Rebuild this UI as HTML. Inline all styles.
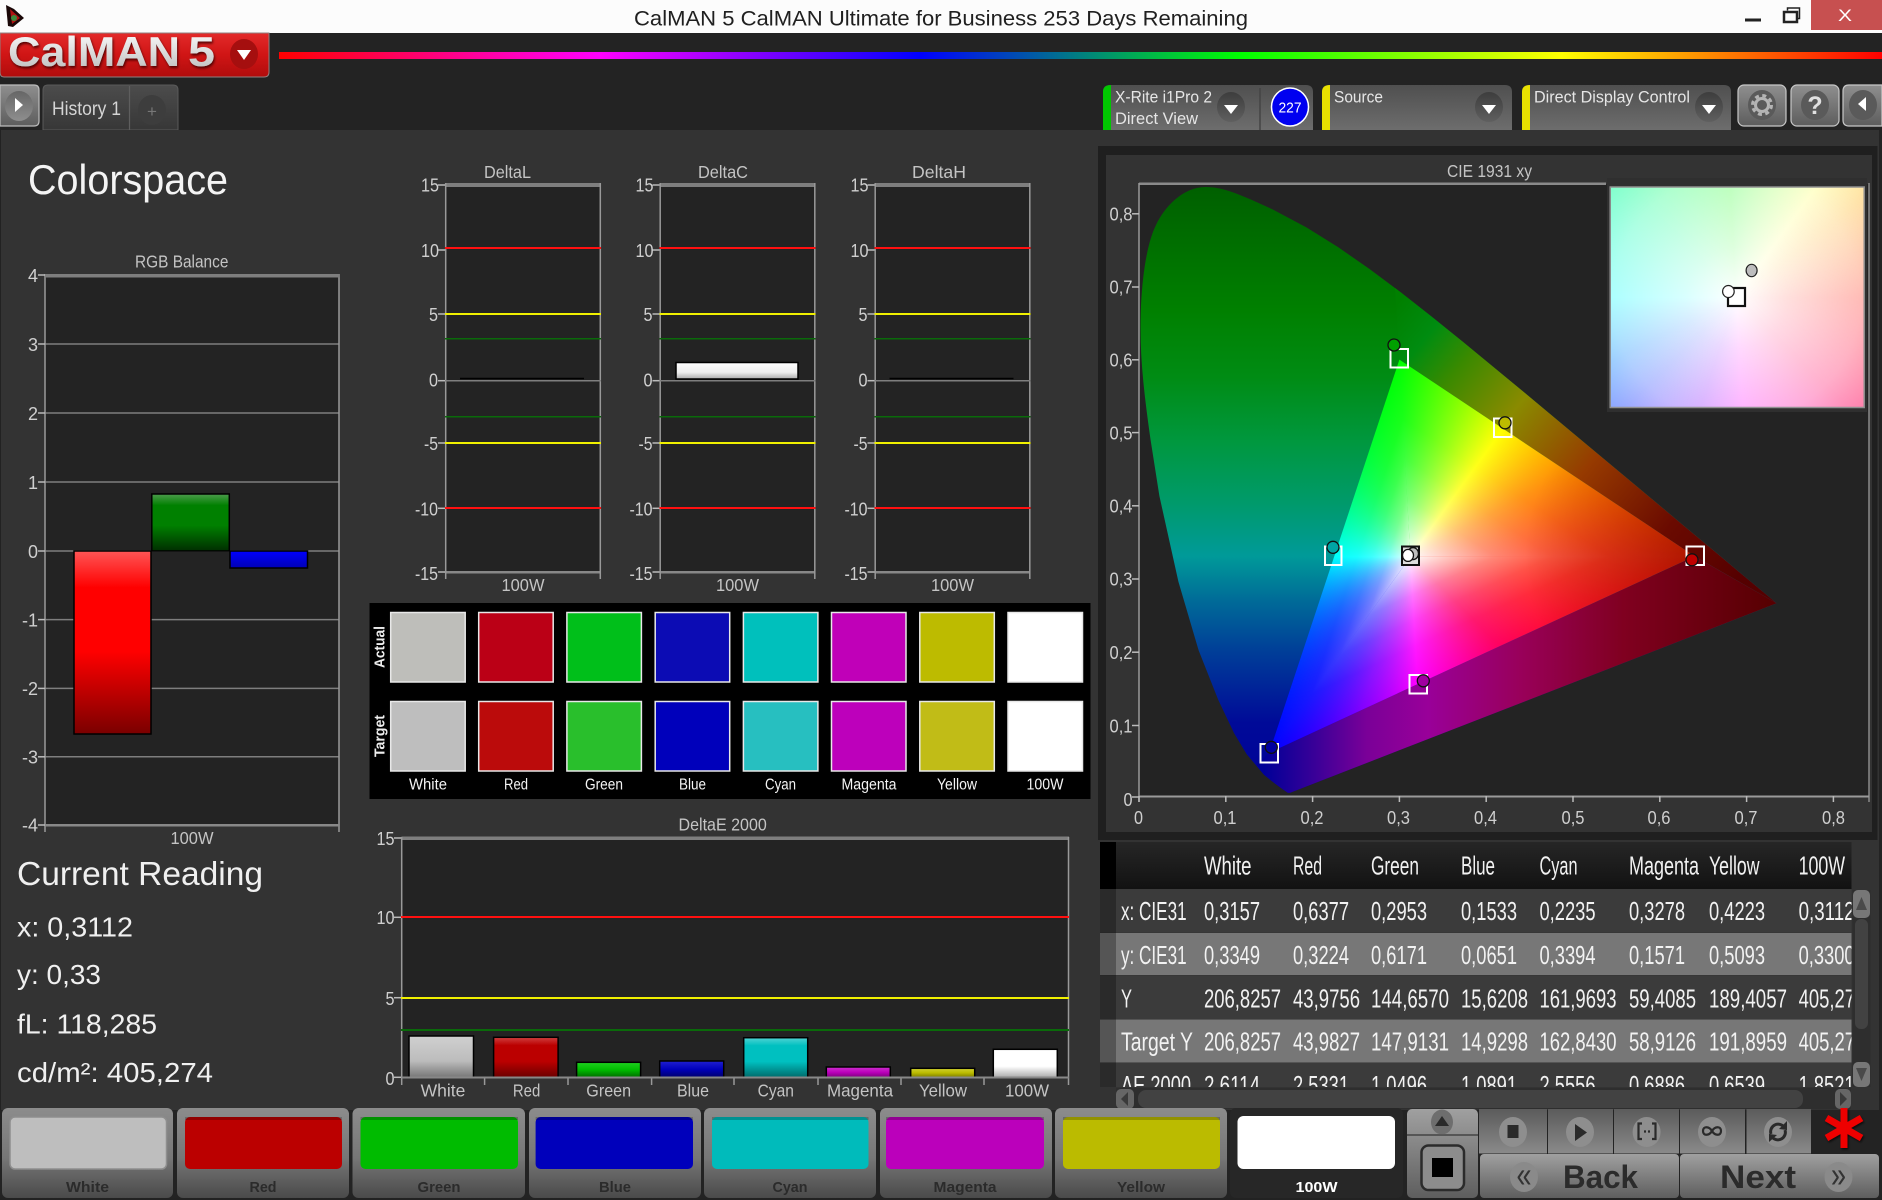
<!DOCTYPE html>
<html>
<head>
<meta charset="utf-8">
<title>CalMAN 5</title>
<style>
html,body{margin:0;padding:0;background:#232323;width:1882px;height:1200px;overflow:hidden}
svg{display:block;position:absolute;left:0;top:0}
text{font-family:"Liberation Sans",sans-serif}
.lb{fill:#cfcfcf;font-size:18px}
.ti{fill:#c4c4c4;font-size:17.5px}
.tb{fill:#f2f2f2;font-size:26px}
.bl{fill:#2b2b2b;font-size:15px;font-weight:bold}
.cr{fill:#f0f0f0}
</style>
</head>
<body>
<svg width="1882" height="1200" viewBox="0 0 1882 1200" xmlns="http://www.w3.org/2000/svg">
<defs>
<linearGradient id="rainbow" x1="279" x2="1882" y1="0" y2="0" gradientUnits="userSpaceOnUse">
<stop offset="0" stop-color="#f00"/><stop offset=".2" stop-color="#f0f"/><stop offset=".4" stop-color="#00f"/><stop offset=".6" stop-color="#0f0"/><stop offset=".8" stop-color="#ff0"/><stop offset="1" stop-color="#f00"/>
</linearGradient>
<linearGradient id="logo" x1="0" x2="0" y1="0" y2="1"><stop offset="0" stop-color="#e32a2a"/><stop offset=".5" stop-color="#d01515"/><stop offset="1" stop-color="#b00c0c"/></linearGradient>
<linearGradient id="logot" x1="0" x2="0" y1="0" y2="1"><stop offset="0" stop-color="#fff"/><stop offset="1" stop-color="#b9b9b9"/></linearGradient>
<linearGradient id="tab" x1="0" x2="0" y1="0" y2="1"><stop offset="0" stop-color="#4c4c4c"/><stop offset="1" stop-color="#373737"/></linearGradient>
<linearGradient id="sel" x1="0" x2="0" y1="0" y2="1"><stop offset="0" stop-color="#4f4f4f"/><stop offset="1" stop-color="#6d6d6d"/></linearGradient>
<linearGradient id="gb" x1="0" x2="0" y1="0" y2="1"><stop offset="0" stop-color="#8f8f8f"/><stop offset="1" stop-color="#5d5d5d"/></linearGradient>
<linearGradient id="circ" x1="0" x2="0" y1="0" y2="1"><stop offset="0" stop-color="#3d3d3d"/><stop offset="1" stop-color="#5f5f5f"/></linearGradient>
<linearGradient id="circ2" x1="0" x2="0" y1="0" y2="1"><stop offset="0" stop-color="#666"/><stop offset="1" stop-color="#8e8e8e"/></linearGradient>
<linearGradient id="bt" x1="0" x2="0" y1="0" y2="1"><stop offset="0" stop-color="#8c8c8c"/><stop offset=".55" stop-color="#777"/><stop offset="1" stop-color="#4a4a4a"/></linearGradient>
<linearGradient id="act" x1="0" x2="0" y1="0" y2="1"><stop offset="0" stop-color="#5b5b5b"/><stop offset="1" stop-color="#8a8a8a"/></linearGradient>
<linearGradient id="act2" x1="0" x2="0" y1="0" y2="1"><stop offset="0" stop-color="#a0a0a0"/><stop offset="1" stop-color="#5e5e5e"/></linearGradient>
<linearGradient id="hd" x1="0" x2="0" y1="0" y2="1"><stop offset="0" stop-color="#262626"/><stop offset="1" stop-color="#121212"/></linearGradient>
<linearGradient id="br" x1="0" x2="0" y1="0" y2="1"><stop offset="0" stop-color="#ff5555"/><stop offset=".2" stop-color="#f00"/><stop offset=".55" stop-color="#f00"/><stop offset="1" stop-color="#7a0000"/></linearGradient>
<linearGradient id="bg" x1="0" x2="0" y1="0" y2="1"><stop offset="0" stop-color="#4c9c4c"/><stop offset=".2" stop-color="#008000"/><stop offset=".55" stop-color="#008000"/><stop offset="1" stop-color="#002e00"/></linearGradient>
<linearGradient id="bb" x1="0" x2="0" y1="0" y2="1"><stop offset="0" stop-color="#00f"/><stop offset="1" stop-color="#0000b5"/></linearGradient>
<linearGradient id="wb" x1="0" x2="0" y1="0" y2="1"><stop offset="0" stop-color="#fff"/><stop offset=".6" stop-color="#eee"/><stop offset="1" stop-color="#aaa"/></linearGradient>
<linearGradient id="e1" x1="0" x2="0" y1="0" y2="1"><stop offset="0" stop-color="#d0d0d0"/><stop offset=".6" stop-color="#bcbcbc"/><stop offset="1" stop-color="#777"/></linearGradient>
<linearGradient id="e2" x1="0" x2="0" y1="0" y2="1"><stop offset="0" stop-color="#d04040"/><stop offset=".2" stop-color="#bb0000"/><stop offset=".6" stop-color="#bb0000"/><stop offset="1" stop-color="#6a0000"/></linearGradient>
<linearGradient id="e3" x1="0" x2="0" y1="0" y2="1"><stop offset="0" stop-color="#20d020"/><stop offset=".5" stop-color="#00bb00"/><stop offset="1" stop-color="#006a00"/></linearGradient>
<linearGradient id="e4" x1="0" x2="0" y1="0" y2="1"><stop offset="0" stop-color="#2020d0"/><stop offset=".5" stop-color="#0000bb"/><stop offset="1" stop-color="#00006a"/></linearGradient>
<linearGradient id="e5" x1="0" x2="0" y1="0" y2="1"><stop offset="0" stop-color="#50d4d4"/><stop offset=".2" stop-color="#00c0c0"/><stop offset=".6" stop-color="#00c0c0"/><stop offset="1" stop-color="#006a6a"/></linearGradient>
<linearGradient id="e6" x1="0" x2="0" y1="0" y2="1"><stop offset="0" stop-color="#d030d0"/><stop offset=".5" stop-color="#bb00bb"/><stop offset="1" stop-color="#7a007a"/></linearGradient>
<linearGradient id="e7" x1="0" x2="0" y1="0" y2="1"><stop offset="0" stop-color="#d0d030"/><stop offset=".5" stop-color="#bbbb00"/><stop offset="1" stop-color="#7a7a00"/></linearGradient>
<linearGradient id="e8" x1="0" x2="0" y1="0" y2="1"><stop offset="0" stop-color="#fff"/><stop offset=".6" stop-color="#fff"/><stop offset="1" stop-color="#aaa"/></linearGradient>
<linearGradient id="loc" x1="0" x2="0" y1="189" y2="796" gradientUnits="userSpaceOnUse">
<stop offset="0" stop-color="#006000"/><stop offset=".1" stop-color="#007000"/><stop offset=".2" stop-color="#008000"/><stop offset=".31" stop-color="#008c14"/><stop offset=".42" stop-color="#009840"/><stop offset=".52" stop-color="#009a6c"/><stop offset=".605" stop-color="#009a99"/><stop offset=".68" stop-color="#006a98"/><stop offset=".76" stop-color="#003f98"/><stop offset=".88" stop-color="#000a98"/><stop offset="1" stop-color="#000098"/>
</linearGradient>
<linearGradient id="ur" x1="1400" y1="300" x2="1740" y2="580" gradientUnits="userSpaceOnUse">
<stop offset="0" stop-color="#008000"/><stop offset=".1" stop-color="#008c10"/><stop offset=".2" stop-color="#3a8a00"/><stop offset=".36" stop-color="#8a8a00"/><stop offset=".57" stop-color="#963a00"/><stop offset=".8" stop-color="#6a0a00"/><stop offset="1" stop-color="#550000"/>
</linearGradient>
<linearGradient id="lo" x1="1264" x2="1777" y1="0" y2="0" gradientUnits="userSpaceOnUse">
<stop offset="0" stop-color="#000098"/><stop offset=".1" stop-color="#3a0098"/><stop offset=".2" stop-color="#7a0098"/><stop offset=".32" stop-color="#990099"/><stop offset=".5" stop-color="#99005a"/><stop offset=".7" stop-color="#800020"/><stop offset="1" stop-color="#560000"/>
</linearGradient>
<linearGradient id="w1" x1="1410.4" y1="556.9" x2="1498.2" y2="425.3" gradientUnits="userSpaceOnUse">
<stop offset="0" stop-color="#fff" stop-opacity="1"/><stop offset=".15" stop-color="#fff" stop-opacity=".72"/><stop offset=".3" stop-color="#fff" stop-opacity=".46"/><stop offset=".5" stop-color="#fff" stop-opacity=".24"/><stop offset=".7" stop-color="#fff" stop-opacity=".1"/><stop offset="1" stop-color="#fff" stop-opacity="0"/>
</linearGradient>
<linearGradient id="w2" x1="1410.4" y1="556.9" x2="1341.6" y2="534.1" gradientUnits="userSpaceOnUse">
<stop offset="0" stop-color="#fff" stop-opacity="1"/><stop offset=".15" stop-color="#fff" stop-opacity=".72"/><stop offset=".3" stop-color="#fff" stop-opacity=".46"/><stop offset=".5" stop-color="#fff" stop-opacity=".24"/><stop offset=".7" stop-color="#fff" stop-opacity=".1"/><stop offset="1" stop-color="#fff" stop-opacity="0"/>
</linearGradient>
<linearGradient id="w3" x1="1410.4" y1="556.9" x2="1460.1" y2="664.5" gradientUnits="userSpaceOnUse">
<stop offset="0" stop-color="#fff" stop-opacity="1"/><stop offset=".15" stop-color="#fff" stop-opacity=".72"/><stop offset=".3" stop-color="#fff" stop-opacity=".46"/><stop offset=".5" stop-color="#fff" stop-opacity=".24"/><stop offset=".7" stop-color="#fff" stop-opacity=".1"/><stop offset="1" stop-color="#fff" stop-opacity="0"/>
</linearGradient>
<radialGradient id="rd" cx="1694.5" cy="556.2" r="170" gradientUnits="userSpaceOnUse"><stop offset="0" stop-color="#000" stop-opacity=".32"/><stop offset="1" stop-color="#000" stop-opacity="0"/></radialGradient>
<filter id="sh" x="-10%" y="-20%" width="120%" height="150%"><feDropShadow dx="1" dy="2" stdDeviation="1.2" flood-color="#400" flood-opacity=".9"/></filter>
<filter id="sh2" x="-20%" y="-20%" width="140%" height="140%"><feDropShadow dx="1" dy="1.500" stdDeviation="1" flood-color="#000" flood-opacity=".7"/></filter>
<clipPath id="tc"><rect x="1100" y="842" width="751.5" height="245"/></clipPath>
</defs>

<!-- window background -->
<rect width="1882" height="1200" fill="#232323"/>
<rect x="0" y="0" width="1882" height="33" fill="#fcfcfc"/>
<polygon points="6,5 14,9 24,18 13,27 8,26" fill="#1a0808"/>
<polygon points="10,9 20,18 12,24" fill="#b01212"/>
<circle cx="14" cy="18" r="3" fill="#3c8a3c"/>
<text x="634" y="25.5" font-size="21.5" fill="#202020" textLength="614" lengthAdjust="spacingAndGlyphs">CalMAN 5 CalMAN Ultimate for Business 253 Days Remaining</text>
<rect x="1745" y="18.5" width="16" height="3" fill="#222"/>
<rect x="1784" y="12" width="13" height="10" fill="none" stroke="#222" stroke-width="2.500"/>
<path d="M1787.500 10.500V8H1799.500V18.500H1798" fill="none" stroke="#222" stroke-width="1.500"/>
<rect x="1811" y="0" width="71" height="30" fill="#c75050"/>
<text x="1845" y="21" font-size="16.500" fill="#fff" text-anchor="middle" textLength="14" lengthAdjust="spacingAndGlyphs">X</text>

<!-- logo -->
<rect x="279" y="52" width="1603" height="7" fill="url(#rainbow)"/>
<path d="M0 33H269V72Q269 77 264 77H4Q0 77 0 72Z" fill="url(#logo)" stroke="#8f8080" stroke-width="1"/>
<text x="8" y="66" font-size="42" font-weight="bold" fill="url(#logot)" filter="url(#sh)" textLength="172" lengthAdjust="spacingAndGlyphs">CalMAN</text>
<text x="188" y="66" font-size="42" font-weight="bold" fill="url(#logot)" filter="url(#sh)" textLength="27" lengthAdjust="spacingAndGlyphs">5</text>
<ellipse cx="244" cy="54" rx="14" ry="15" fill="#a50f0f"/>
<polygon points="237,50 251,50 244,60" fill="#fff"/>

<!-- tab row -->
<path d="M0 85H34Q39 85 39 90V121Q39 126 34 126H0Z" fill="url(#gb)" stroke="#bdbdbd" stroke-width="1.2"/>
<ellipse cx="19" cy="106" rx="14" ry="15" fill="url(#circ2)"/>
<polygon points="15,98 15,112 23,105" fill="#fff"/>
<path d="M43 130V90Q43 85 48 85H173Q178 85 178 90V130Z" fill="url(#tab)" stroke="#5a5a5a" stroke-width="1"/>
<line x1="129.500" y1="86" x2="129.500" y2="130" stroke="#5e5e5e" stroke-width="1.200"/>
<text x="52" y="115" font-size="19" fill="#d5d5d5" textLength="69" lengthAdjust="spacingAndGlyphs">History 1</text>
<ellipse cx="152" cy="110" rx="14" ry="15" fill="#3d3d3d"/>
<text x="152" y="117" font-size="17" fill="#777" text-anchor="middle">+</text>

<!-- top right controls -->
<path d="M1103 130V92Q1103 85 1110 85H1306Q1313 85 1313 92V130Z" fill="url(#sel)"/>
<path d="M1103 130V92Q1103 85 1111 85V130Z" fill="#00c800"/>
<line x1="1260" y1="88" x2="1260" y2="130" stroke="#444" stroke-width="1.500"/>
<text x="1115" y="102.500" font-size="17" fill="#e6e6e6" textLength="97" lengthAdjust="spacingAndGlyphs">X-Rite i1Pro 2</text>
<text x="1115" y="124" font-size="17" fill="#e6e6e6" textLength="83" lengthAdjust="spacingAndGlyphs">Direct View</text>
<ellipse cx="1231" cy="107" rx="14" ry="15" fill="url(#circ)"/>
<polygon points="1224,105 1238,105 1231,114" fill="#fff"/>
<ellipse cx="1290" cy="107" rx="18.500" ry="19" fill="#0000f0" stroke="#fff" stroke-width="1.500"/>
<text x="1290" y="112.500" font-size="15" fill="#fff" text-anchor="middle" textLength="23" lengthAdjust="spacingAndGlyphs">227</text>

<path d="M1322 130V92Q1322 85 1329 85H1505Q1512 85 1512 92V130Z" fill="url(#sel)"/>
<path d="M1322 130V92Q1322 85 1330 85V130Z" fill="#e8e000"/>
<text x="1334" y="102.500" font-size="17" fill="#e6e6e6" textLength="49" lengthAdjust="spacingAndGlyphs">Source</text>
<ellipse cx="1489" cy="107" rx="14" ry="15" fill="url(#circ)"/>
<polygon points="1482,105 1496,105 1489,114" fill="#fff"/>

<path d="M1522 130V92Q1522 85 1529 85H1724Q1731 85 1731 92V130Z" fill="url(#sel)"/>
<path d="M1522 130V92Q1522 85 1530 85V130Z" fill="#e8e000"/>
<text x="1534" y="102.500" font-size="17" fill="#e6e6e6" textLength="156" lengthAdjust="spacingAndGlyphs">Direct Display Control</text>
<ellipse cx="1709" cy="107" rx="14" ry="15" fill="url(#circ)"/>
<polygon points="1702,105 1716,105 1709,114" fill="#fff"/>

<rect x="1738" y="85" width="48" height="41" rx="6" fill="url(#gb)" stroke="#c8c8c8" stroke-width="1.200"/>
<ellipse cx="1762" cy="105" rx="14" ry="15" fill="#5a5a5a"/>
<circle cx="1762" cy="105" r="6.500" fill="none" stroke="#b4b4b4" stroke-width="3"/>
<circle cx="1762" cy="105" r="9.500" fill="none" stroke="#b4b4b4" stroke-width="3" stroke-dasharray="4 3.460"/>
<rect x="1791" y="85" width="48" height="41" rx="6" fill="url(#gb)" stroke="#c8c8c8" stroke-width="1.200"/>
<ellipse cx="1815" cy="105" rx="14" ry="15" fill="#5a5a5a"/>
<text x="1815" y="114" font-size="25" font-weight="bold" fill="#e0e0e0" text-anchor="middle">?</text>
<path d="M1882 85H1849Q1843 85 1843 91V120Q1843 126 1849 126H1882Z" fill="url(#gb)" stroke="#c8c8c8" stroke-width="1.200"/>
<ellipse cx="1863" cy="105" rx="14" ry="15" fill="#5a5a5a"/>
<polygon points="1866,97 1866,111 1858,104" fill="#fff"/>

<!-- main panel -->
<rect x="1" y="130" width="1878" height="980" fill="#333"/>
<rect x="0" y="130" width="1" height="980" fill="#222"/>
<text x="28" y="194" font-size="42" fill="#f4f4f4" textLength="200" lengthAdjust="spacingAndGlyphs">Colorspace</text>

<!-- RGB Balance -->
<rect x="45" y="275" width="294" height="550" fill="#232323"/>
<g stroke="#7e7e7e" stroke-width="1.500">
<line x1="45" x2="339" y1="344" y2="344"/><line x1="45" x2="339" y1="413" y2="413"/><line x1="45" x2="339" y1="482" y2="482"/><line x1="45" x2="339" y1="551" y2="551"/><line x1="45" x2="339" y1="619.600" y2="619.600"/><line x1="45" x2="339" y1="688.400" y2="688.400"/><line x1="45" x2="339" y1="756.800" y2="756.800"/>
</g>
<g stroke="#999" stroke-width="1.500" fill="none">
<line x1="45" x2="45" y1="274" y2="832"/><line x1="339" x2="339" y1="274" y2="832"/>
</g>
<rect x="45" y="274" width="294.800" height="3.500" fill="#7e7e7e"/>
<rect x="45" y="824" width="294.800" height="2.500" fill="#888"/>
<g stroke="#bbb" stroke-width="1.500"><line x1="38" x2="45" y1="275" y2="275"/><line x1="38" x2="45" y1="344" y2="344"/><line x1="38" x2="45" y1="413" y2="413"/><line x1="38" x2="45" y1="482" y2="482"/><line x1="38" x2="45" y1="551" y2="551"/><line x1="38" x2="45" y1="619.600" y2="619.600"/><line x1="38" x2="45" y1="688.400" y2="688.400"/><line x1="38" x2="45" y1="756.800" y2="756.800"/><line x1="38" x2="45" y1="825" y2="825"/></g>
<g class="lb" text-anchor="end">
<text x="38" y="282">4</text><text x="38" y="351">3</text><text x="38" y="420">2</text><text x="38" y="489">1</text><text x="38" y="558">0</text><text x="38" y="626.500">-1</text><text x="38" y="695">-2</text><text x="38" y="763.500">-3</text><text x="38" y="831.500">-4</text>
</g>
<rect x="74" y="551" width="77" height="183" fill="url(#br)" stroke="#000" stroke-width="1.500"/>
<rect x="151.800" y="494" width="77.500" height="57" fill="url(#bg)" stroke="#000" stroke-width="1.500"/>
<rect x="230" y="551" width="77.500" height="17" fill="url(#bb)" stroke="#000" stroke-width="1.500"/>
<text x="135" y="267.700" class="ti" textLength="93.400" lengthAdjust="spacingAndGlyphs">RGB Balance</text>
<text x="170.500" y="844" class="ti" textLength="43" lengthAdjust="spacingAndGlyphs">100W</text>

<!-- Current reading -->
<text x="17" y="885" class="cr" font-size="33" textLength="246" lengthAdjust="spacingAndGlyphs">Current Reading</text>
<text x="17" y="936.500" class="cr" font-size="27.500" textLength="116" lengthAdjust="spacingAndGlyphs">x: 0,3112</text>
<text x="17" y="984" class="cr" font-size="27.500" textLength="84" lengthAdjust="spacingAndGlyphs">y: 0,33</text>
<text x="17" y="1033.500" class="cr" font-size="27.500" textLength="140" lengthAdjust="spacingAndGlyphs">fL: 118,285</text>
<text x="17" y="1082" class="cr" font-size="27.500" textLength="196" lengthAdjust="spacingAndGlyphs">cd/m²: 405,274</text>

<!-- DeltaL -->
<g>
<rect x="445.500" y="185" width="155" height="388" fill="#232323"/>
<rect x="445.500" y="183" width="155.500" height="4" fill="#7e7e7e"/>
<rect x="445.500" y="571" width="155.500" height="2.500" fill="#888"/>
<g stroke="#999" stroke-width="1.500"><line x1="445.700" x2="445.700" y1="183" y2="579"/><line x1="600.300" x2="600.300" y1="183" y2="579"/></g>
<line x1="445" x2="601" y1="248" y2="248" stroke="#ff1010" stroke-width="2"/>
<line x1="445" x2="601" y1="314" y2="314" stroke="#f0f000" stroke-width="2"/>
<line x1="445" x2="601" y1="338.700" y2="338.700" stroke="#0a6a0a" stroke-width="1.500"/>
<line x1="445" x2="601" y1="380.700" y2="380.700" stroke="#7e7e7e" stroke-width="1.500"/>
<line x1="445" x2="601" y1="416.700" y2="416.700" stroke="#0a6a0a" stroke-width="1.500"/>
<line x1="445" x2="601" y1="443" y2="443" stroke="#f0f000" stroke-width="2"/>
<line x1="445" x2="601" y1="508" y2="508" stroke="#ff1010" stroke-width="2"/>
<g stroke="#bbb" stroke-width="1.500"><line x1="438" x2="445" y1="185" y2="185"/><line x1="438" x2="445" y1="250" y2="250"/><line x1="438" x2="445" y1="314" y2="314"/><line x1="438" x2="445" y1="380.700" y2="380.700"/><line x1="438" x2="445" y1="443" y2="443"/><line x1="438" x2="445" y1="508.300" y2="508.300"/><line x1="438" x2="445" y1="572" y2="572"/></g>
<g class="lb" text-anchor="end">
<text x="439" y="191.700" textLength="18" lengthAdjust="spacingAndGlyphs">15</text><text x="439" y="257" textLength="18" lengthAdjust="spacingAndGlyphs">10</text><text x="438" y="321" textLength="9" lengthAdjust="spacingAndGlyphs">5</text><text x="438" y="386.700" textLength="9" lengthAdjust="spacingAndGlyphs">0</text><text x="438" y="450" textLength="14" lengthAdjust="spacingAndGlyphs">-5</text><text x="438" y="515.700" textLength="23" lengthAdjust="spacingAndGlyphs">-10</text><text x="438" y="580" textLength="23" lengthAdjust="spacingAndGlyphs">-15</text>
</g>
<line x1="460" x2="584" y1="378.500" y2="378.500" stroke="#000" stroke-width="1.500"/>
<text x="484" y="178" class="ti" textLength="47" lengthAdjust="spacingAndGlyphs">DeltaL</text>
<text x="501.500" y="591" class="ti" textLength="43" lengthAdjust="spacingAndGlyphs">100W</text>
</g>

<!-- DeltaC -->
<g transform="translate(214.500 0)">
<rect x="445.500" y="185" width="155" height="388" fill="#232323"/>
<rect x="445.500" y="183" width="155.500" height="4" fill="#7e7e7e"/>
<rect x="445.500" y="571" width="155.500" height="2.500" fill="#888"/>
<g stroke="#999" stroke-width="1.500"><line x1="445.700" x2="445.700" y1="183" y2="579"/><line x1="600.300" x2="600.300" y1="183" y2="579"/></g>
<line x1="445" x2="601" y1="248" y2="248" stroke="#ff1010" stroke-width="2"/>
<line x1="445" x2="601" y1="314" y2="314" stroke="#f0f000" stroke-width="2"/>
<line x1="445" x2="601" y1="338.700" y2="338.700" stroke="#0a6a0a" stroke-width="1.500"/>
<line x1="445" x2="601" y1="380.700" y2="380.700" stroke="#7e7e7e" stroke-width="1.500"/>
<line x1="445" x2="601" y1="416.700" y2="416.700" stroke="#0a6a0a" stroke-width="1.500"/>
<line x1="445" x2="601" y1="443" y2="443" stroke="#f0f000" stroke-width="2"/>
<line x1="445" x2="601" y1="508" y2="508" stroke="#ff1010" stroke-width="2"/>
<g stroke="#bbb" stroke-width="1.500"><line x1="438" x2="445" y1="185" y2="185"/><line x1="438" x2="445" y1="250" y2="250"/><line x1="438" x2="445" y1="314" y2="314"/><line x1="438" x2="445" y1="380.700" y2="380.700"/><line x1="438" x2="445" y1="443" y2="443"/><line x1="438" x2="445" y1="508.300" y2="508.300"/><line x1="438" x2="445" y1="572" y2="572"/></g>
<g class="lb" text-anchor="end">
<text x="439" y="191.700" textLength="18" lengthAdjust="spacingAndGlyphs">15</text><text x="439" y="257" textLength="18" lengthAdjust="spacingAndGlyphs">10</text><text x="438" y="321" textLength="9" lengthAdjust="spacingAndGlyphs">5</text><text x="438" y="386.700" textLength="9" lengthAdjust="spacingAndGlyphs">0</text><text x="438" y="450" textLength="14" lengthAdjust="spacingAndGlyphs">-5</text><text x="438" y="515.700" textLength="23" lengthAdjust="spacingAndGlyphs">-10</text><text x="438" y="580" textLength="23" lengthAdjust="spacingAndGlyphs">-15</text>
</g>
<rect x="461.500" y="362.500" width="122" height="16.500" fill="url(#wb)" stroke="#000" stroke-width="1.500"/>
<text x="483.500" y="178" class="ti" textLength="50" lengthAdjust="spacingAndGlyphs">DeltaC</text>
<text x="501.500" y="591" class="ti" textLength="43" lengthAdjust="spacingAndGlyphs">100W</text>
</g>

<!-- DeltaH -->
<g transform="translate(429.500 0)">
<rect x="445.500" y="185" width="155" height="388" fill="#232323"/>
<rect x="445.500" y="183" width="155.500" height="4" fill="#7e7e7e"/>
<rect x="445.500" y="571" width="155.500" height="2.500" fill="#888"/>
<g stroke="#999" stroke-width="1.500"><line x1="445.700" x2="445.700" y1="183" y2="579"/><line x1="600.300" x2="600.300" y1="183" y2="579"/></g>
<line x1="445" x2="601" y1="248" y2="248" stroke="#ff1010" stroke-width="2"/>
<line x1="445" x2="601" y1="314" y2="314" stroke="#f0f000" stroke-width="2"/>
<line x1="445" x2="601" y1="338.700" y2="338.700" stroke="#0a6a0a" stroke-width="1.500"/>
<line x1="445" x2="601" y1="380.700" y2="380.700" stroke="#7e7e7e" stroke-width="1.500"/>
<line x1="445" x2="601" y1="416.700" y2="416.700" stroke="#0a6a0a" stroke-width="1.500"/>
<line x1="445" x2="601" y1="443" y2="443" stroke="#f0f000" stroke-width="2"/>
<line x1="445" x2="601" y1="508" y2="508" stroke="#ff1010" stroke-width="2"/>
<g stroke="#bbb" stroke-width="1.500"><line x1="438" x2="445" y1="185" y2="185"/><line x1="438" x2="445" y1="250" y2="250"/><line x1="438" x2="445" y1="314" y2="314"/><line x1="438" x2="445" y1="380.700" y2="380.700"/><line x1="438" x2="445" y1="443" y2="443"/><line x1="438" x2="445" y1="508.300" y2="508.300"/><line x1="438" x2="445" y1="572" y2="572"/></g>
<g class="lb" text-anchor="end">
<text x="439" y="191.700" textLength="18" lengthAdjust="spacingAndGlyphs">15</text><text x="439" y="257" textLength="18" lengthAdjust="spacingAndGlyphs">10</text><text x="438" y="321" textLength="9" lengthAdjust="spacingAndGlyphs">5</text><text x="438" y="386.700" textLength="9" lengthAdjust="spacingAndGlyphs">0</text><text x="438" y="450" textLength="14" lengthAdjust="spacingAndGlyphs">-5</text><text x="438" y="515.700" textLength="23" lengthAdjust="spacingAndGlyphs">-10</text><text x="438" y="580" textLength="23" lengthAdjust="spacingAndGlyphs">-15</text>
</g>
<line x1="460" x2="584" y1="378.500" y2="378.500" stroke="#000" stroke-width="1.500"/>
<text x="482.500" y="178" class="ti" textLength="54" lengthAdjust="spacingAndGlyphs">DeltaH</text>
<text x="501.500" y="591" class="ti" textLength="43" lengthAdjust="spacingAndGlyphs">100W</text>
</g>

<!-- swatches -->
<rect x="369.500" y="603" width="721" height="196" fill="#000"/>
<g stroke="#e8e8e8" stroke-width="1.500">
<rect x="390.700" y="612.500" width="74.500" height="69.500" fill="#bebeba"/>
<rect x="478.700" y="612.500" width="74.500" height="69.500" fill="#bb0016"/>
<rect x="566.900" y="612.500" width="74.500" height="69.500" fill="#00bf1a"/>
<rect x="655.200" y="612.500" width="74.500" height="69.500" fill="#0c0cb4"/>
<rect x="743.400" y="612.500" width="74.500" height="69.500" fill="#00c0bc"/>
<rect x="831.500" y="612.500" width="74.500" height="69.500" fill="#c000b8"/>
<rect x="919.800" y="612.500" width="74.500" height="69.500" fill="#bdbb00"/>
<rect x="1008" y="612.500" width="74.500" height="69.500" fill="#fff"/>
<rect x="390.700" y="701.500" width="74.500" height="69.500" fill="#bebebe"/>
<rect x="478.700" y="701.500" width="74.500" height="69.500" fill="#bb0b0b"/>
<rect x="566.900" y="701.500" width="74.500" height="69.500" fill="#29bf2c"/>
<rect x="655.200" y="701.500" width="74.500" height="69.500" fill="#0000bb"/>
<rect x="743.400" y="701.500" width="74.500" height="69.500" fill="#27bfc0"/>
<rect x="831.500" y="701.500" width="74.500" height="69.500" fill="#bd00bb"/>
<rect x="919.800" y="701.500" width="74.500" height="69.500" fill="#c1bc17"/>
<rect x="1008" y="701.500" width="74.500" height="69.500" fill="#fff"/>
</g>
<g fill="#f4f4f4" font-size="15.500" text-anchor="middle">
<text x="428" y="789.500" textLength="38" lengthAdjust="spacingAndGlyphs">White</text>
<text x="516" y="789.500" textLength="24" lengthAdjust="spacingAndGlyphs">Red</text>
<text x="604" y="789.500" textLength="38" lengthAdjust="spacingAndGlyphs">Green</text>
<text x="692.500" y="789.500" textLength="27" lengthAdjust="spacingAndGlyphs">Blue</text>
<text x="780.500" y="789.500" textLength="31" lengthAdjust="spacingAndGlyphs">Cyan</text>
<text x="869" y="789.500" textLength="55" lengthAdjust="spacingAndGlyphs">Magenta</text>
<text x="957" y="789.500" textLength="40" lengthAdjust="spacingAndGlyphs">Yellow</text>
<text x="1045" y="789.500" textLength="37" lengthAdjust="spacingAndGlyphs">100W</text>
</g>
<text transform="translate(384.500 647) rotate(-90)" text-anchor="middle" font-size="14.500" font-weight="bold" fill="#eee" textLength="42" lengthAdjust="spacingAndGlyphs">Actual</text>
<text transform="translate(384.500 736) rotate(-90)" text-anchor="middle" font-size="14.500" font-weight="bold" fill="#eee" textLength="42" lengthAdjust="spacingAndGlyphs">Target</text>

<!-- DeltaE 2000 -->
<rect x="401.500" y="838" width="667" height="240" fill="#232323"/>
<rect x="401.500" y="836.500" width="667.500" height="3.500" fill="#7e7e7e"/>
<g stroke="#999" stroke-width="1.500"><line x1="401.700" x2="401.700" y1="837" y2="1085"/><line x1="1068.500" x2="1068.500" y1="837" y2="1085"/>
<line x1="484.600" x2="484.600" y1="1078" y2="1085"/><line x1="568" x2="568" y1="1078" y2="1085"/><line x1="651.600" x2="651.600" y1="1078" y2="1085"/><line x1="734" x2="734" y1="1078" y2="1085"/><line x1="818" x2="818" y1="1078" y2="1085"/><line x1="901" x2="901" y1="1078" y2="1085"/><line x1="984" x2="984" y1="1078" y2="1085"/></g>
<line x1="401" x2="1069" y1="917" y2="917" stroke="#ff1010" stroke-width="2"/>
<line x1="401" x2="1069" y1="998" y2="998" stroke="#f0f000" stroke-width="2"/>
<line x1="401" x2="1069" y1="1030" y2="1030" stroke="#0a6a0a" stroke-width="2"/>
<g stroke="#000" stroke-width="1.500">
<rect x="409" y="1036" width="64.500" height="41.500" fill="url(#e1)"/>
<rect x="493.600" y="1037.300" width="64.500" height="40.200" fill="url(#e2)"/>
<rect x="576.600" y="1062.300" width="64" height="15.200" fill="url(#e3)"/>
<rect x="659.700" y="1061" width="64" height="16.500" fill="url(#e4)"/>
<rect x="743.700" y="1037.700" width="64" height="39.800" fill="url(#e5)"/>
<rect x="826.300" y="1067" width="64" height="10.500" fill="url(#e6)"/>
<rect x="910.700" y="1068.300" width="64" height="9.200" fill="url(#e7)"/>
<rect x="993.300" y="1049.300" width="64" height="28.200" fill="url(#e8)"/>
</g>
<rect x="401.500" y="1076.500" width="667.500" height="2" fill="#888"/>
<g stroke="#bbb" stroke-width="1.500"><line x1="394" x2="401" y1="838" y2="838"/><line x1="394" x2="401" y1="917.300" y2="917.300"/><line x1="394" x2="401" y1="997.700" y2="997.700"/><line x1="394" x2="401" y1="1077.300" y2="1077.300"/></g>
<g class="lb" text-anchor="end">
<text x="394.500" y="845" textLength="18" lengthAdjust="spacingAndGlyphs">15</text><text x="394.500" y="924" textLength="18" lengthAdjust="spacingAndGlyphs">10</text><text x="394.500" y="1005" textLength="9" lengthAdjust="spacingAndGlyphs">5</text><text x="394.500" y="1085" textLength="9" lengthAdjust="spacingAndGlyphs">0</text>
</g>
<text x="678.500" y="830.700" class="ti" textLength="88.300" lengthAdjust="spacingAndGlyphs">DeltaE 2000</text>
<g class="ti" text-anchor="middle">
<text x="443" y="1096.700" textLength="44.800" lengthAdjust="spacingAndGlyphs">White</text>
<text x="526.600" y="1096.700" textLength="27.400" lengthAdjust="spacingAndGlyphs">Red</text>
<text x="608.700" y="1096.700" textLength="44.800" lengthAdjust="spacingAndGlyphs">Green</text>
<text x="693" y="1096.700" textLength="32" lengthAdjust="spacingAndGlyphs">Blue</text>
<text x="775.800" y="1096.700" textLength="36.300" lengthAdjust="spacingAndGlyphs">Cyan</text>
<text x="860" y="1096.700" textLength="66" lengthAdjust="spacingAndGlyphs">Magenta</text>
<text x="943" y="1096.700" textLength="48" lengthAdjust="spacingAndGlyphs">Yellow</text>
<text x="1027" y="1096.700" textLength="44" lengthAdjust="spacingAndGlyphs">100W</text>
</g>

<!-- CIE panel -->
<rect x="1098" y="146" width="779.500" height="694" fill="#1f1f1f"/>
<rect x="1106" y="155" width="766" height="677" fill="#333"/>
<rect x="1139" y="184" width="730" height="612.400" fill="#232323"/>
<path d="M1290.100 792.800L1287.800 792.700L1281.700 788.500L1274.900 783.500L1264 774.800L1246.700 754.300L1234.100 733.200L1218.200 699.800L1198.600 650.300L1178.400 581.600L1159.400 496L1150.600 440C1145 400 1140.500 365 1140.500 328C1140.500 285 1146 245 1156 225C1164 208 1182 187 1206 187C1222 187 1238 194 1252 200L1273.300 209.700L1306.400 227.400L1338.300 247.300L1369.700 269.100L1400.800 292.400L1431.800 316.700L1462.800 341.800L1524.500 392.600L1583.900 442.200L1638.300 487.600L1683.200 525.200L1716.900 553.200L1739.200 572L1763.100 591.900L1776.700 603.300Z" fill="url(#loc)"/>
<polygon points="1399.400,359.600 1395,288 1400.800,292.400 1431.800,316.700 1462.800,341.800 1524.500,392.600 1583.900,442.200 1638.300,487.600 1683.200,525.200 1716.900,553.200 1739.200,572 1763.100,591.900 1776.700,603.300 1694.500,556.200" fill="url(#ur)"/>
<polygon points="1269.200,752.700 1694.500,556.200 1776.700,603.300 1290.100,792.800 1287.800,792.700 1281.700,788.500 1274.900,783.500 1264,774.800 1256,765" fill="url(#lo)"/>
<foreignObject x="1260" y="350" width="440" height="410">
<div xmlns="http://www.w3.org/1999/xhtml" style="width:440px;height:410px;clip-path:polygon(434.500px 206.200px,139.400px 9.600px,9.200px 402.700px);background:conic-gradient(from 0deg at 150.400px 206.900px,#15ff00 0deg,#ffff00 35.800deg,#ff8a00 62deg,#ff2000 89.900deg,#ff0060 135deg,#ff00ff 176.800deg,#8000ff 198deg,#0000ff 215.800deg,#0080ff 243deg,#00ffff 270deg,#00ff80 315deg,#00ff00 356.800deg,#15ff00 360deg)"></div>
</foreignObject>
<polygon points="1410.400,556.900 1694.500,556.200 1399.400,359.600" fill="url(#w1)"/>
<polygon points="1410.400,556.900 1399.400,359.600 1269.200,752.700" fill="url(#w2)"/>
<polygon points="1410.400,556.900 1269.200,752.700 1694.500,556.200" fill="url(#w3)"/>
<polygon points="1694.500,556.200 1399.400,359.600 1269.200,752.700" fill="url(#rd)"/>

<!-- CIE frame -->
<rect x="1139" y="182.500" width="467" height="2.500" fill="#8a8a8a"/>
<line x1="1139" x2="1139" y1="183" y2="802" stroke="#999" stroke-width="1.500"/>
<line x1="1869" x2="1869" y1="183" y2="802" stroke="#8a8a8a" stroke-width="1.500"/>
<rect x="1139" y="795.500" width="730" height="2" fill="#9a9a9a"/>
<rect x="1607" y="178" width="260" height="234" fill="#2f2f2f"/>
<foreignObject x="1610.700" y="187.300" width="253.500" height="220">
<div xmlns="http://www.w3.org/1999/xhtml" style="width:253.500px;height:220px;background:radial-gradient(circle 168px at 125.300px 110.700px,rgba(255,255,255,1) 0,rgba(255,255,255,.85) 30%,rgba(255,255,255,.68) 74%,rgba(255,255,255,.5) 100%),conic-gradient(from 0deg at 125.300px 110.700px,#30ff30 0deg,#ffff70 35.800deg,#ffc040 52deg,#ff3020 89.900deg,#ff0060 135deg,#ff00ff 176.800deg,#8000ff 198deg,#2040ff 225deg,#0080ff 243deg,#00ffff 270deg,#00ff90 315deg,#20ff20 356.800deg,#30ff30 360deg)"></div>
</foreignObject>
<rect x="1610.200" y="187" width="254" height="220.500" fill="none" stroke="#909090" stroke-width="1.500"/>
<rect x="1728" y="288" width="17" height="18" fill="#fff" stroke="#111" stroke-width="2.200"/>
<ellipse cx="1751.600" cy="270.500" rx="5.500" ry="6.200" fill="#bdbdbd" stroke="#222" stroke-width="1.200"/>
<ellipse cx="1728.400" cy="291.500" rx="5.800" ry="6" fill="#fff" stroke="#222" stroke-width="1.200"/>

<!-- Markers -->
<g fill="none" stroke="#fff" stroke-width="2">
<rect x="1686.500" y="546.500" width="17.500" height="18.500"/>
<rect x="1390.500" y="349" width="17.500" height="18.500"/>
<rect x="1494" y="418.500" width="17.500" height="18.500"/>
<rect x="1325" y="546.500" width="16.500" height="18.500"/>
<rect x="1409.500" y="675" width="17.500" height="18.500"/>
<rect x="1260.500" y="744" width="17.500" height="18.500"/>
</g>
<rect x="1402" y="546.500" width="17" height="18.500" fill="#ddd" stroke="#111" stroke-width="2"/>
<g stroke="#111" stroke-width="1.300">
<ellipse cx="1394" cy="345" rx="6" ry="6" fill="#00a000"/>
<ellipse cx="1505" cy="422.800" rx="6" ry="6" fill="#bdbb00"/>
<ellipse cx="1333" cy="547.300" rx="6" ry="6" fill="#00a5a5"/>
<ellipse cx="1413" cy="553.600" rx="5.500" ry="6" fill="#bdbdbd"/>
<ellipse cx="1408" cy="555.400" rx="5.500" ry="6" fill="#fff"/>
<ellipse cx="1692" cy="559.800" rx="6" ry="6" fill="#c00000"/>
<ellipse cx="1423.300" cy="680.800" rx="6" ry="6" fill="#a000a0"/>
<ellipse cx="1271.300" cy="747.300" rx="6" ry="6" fill="#0000a0"/>
</g>

<!-- CIE axes -->
<g stroke="#bbb" stroke-width="1.500">
<line x1="1132" x2="1139" y1="213.800" y2="213.800"/><line x1="1132" x2="1139" y1="287" y2="287"/><line x1="1132" x2="1139" y1="359.800" y2="359.800"/><line x1="1132" x2="1139" y1="432.600" y2="432.600"/><line x1="1132" x2="1139" y1="505.800" y2="505.800"/><line x1="1132" x2="1139" y1="579" y2="579"/><line x1="1132" x2="1139" y1="652.200" y2="652.200"/><line x1="1132" x2="1139" y1="725.500" y2="725.500"/><line x1="1132" x2="1139" y1="797" y2="797"/>
<line x1="1139" x2="1139" y1="796" y2="802"/><line x1="1225.800" x2="1225.800" y1="796" y2="802"/><line x1="1312.600" x2="1312.600" y1="796" y2="802"/><line x1="1399.400" x2="1399.400" y1="796" y2="802"/><line x1="1486.200" x2="1486.200" y1="796" y2="802"/><line x1="1573" x2="1573" y1="796" y2="802"/><line x1="1659.800" x2="1659.800" y1="796" y2="802"/><line x1="1746.600" x2="1746.600" y1="796" y2="802"/><line x1="1833.400" x2="1833.400" y1="796" y2="802"/>
</g>
<g class="lb" text-anchor="end">
<text x="1132.500" y="220.500" textLength="23" lengthAdjust="spacingAndGlyphs">0,8</text>
<text x="1132.500" y="293.600" textLength="23" lengthAdjust="spacingAndGlyphs">0,7</text>
<text x="1132.500" y="366.400" textLength="23" lengthAdjust="spacingAndGlyphs">0,6</text>
<text x="1132.500" y="439.300" textLength="23" lengthAdjust="spacingAndGlyphs">0,5</text>
<text x="1132.500" y="512.500" textLength="23" lengthAdjust="spacingAndGlyphs">0,4</text>
<text x="1132.500" y="585.700" textLength="23" lengthAdjust="spacingAndGlyphs">0,3</text>
<text x="1132.500" y="658.900" textLength="23" lengthAdjust="spacingAndGlyphs">0,2</text>
<text x="1132.500" y="732.600" textLength="23" lengthAdjust="spacingAndGlyphs">0,1</text>
<text x="1132.500" y="806" textLength="9" lengthAdjust="spacingAndGlyphs">0</text>
</g>
<g class="lb" text-anchor="middle">
<text x="1138.500" y="824" textLength="9" lengthAdjust="spacingAndGlyphs">0</text>
<text x="1225" y="824" textLength="23" lengthAdjust="spacingAndGlyphs">0,1</text>
<text x="1312" y="824" textLength="23" lengthAdjust="spacingAndGlyphs">0,2</text>
<text x="1398.500" y="824" textLength="23" lengthAdjust="spacingAndGlyphs">0,3</text>
<text x="1485.500" y="824" textLength="23" lengthAdjust="spacingAndGlyphs">0,4</text>
<text x="1573" y="824" textLength="23" lengthAdjust="spacingAndGlyphs">0,5</text>
<text x="1659" y="824" textLength="23" lengthAdjust="spacingAndGlyphs">0,6</text>
<text x="1746" y="824" textLength="23" lengthAdjust="spacingAndGlyphs">0,7</text>
<text x="1833.500" y="824" textLength="23" lengthAdjust="spacingAndGlyphs">0,8</text>
</g>
<text x="1447" y="176.800" class="ti" textLength="85" lengthAdjust="spacingAndGlyphs">CIE 1931 xy</text>

<!-- table -->
<rect x="1100" y="842" width="751.500" height="47" fill="url(#hd)"/>
<rect x="1100" y="842" width="16" height="47" fill="#000"/>
<rect x="1100" y="889" width="751.500" height="43.500" fill="#3b3b3b"/>
<rect x="1100" y="933" width="751.500" height="42" fill="#777"/>
<rect x="1100" y="975.500" width="751.500" height="43.500" fill="#3b3b3b"/>
<rect x="1100" y="1019.500" width="751.500" height="43" fill="#777"/>
<rect x="1100" y="1063" width="751.500" height="24" fill="#3b3b3b"/>
<rect x="1100" y="889" width="16" height="198" fill="#000" fill-opacity=".28"/>
<g clip-path="url(#tc)">
<g class="tb">
<text x="1204" y="874.500" textLength="47.500" lengthAdjust="spacingAndGlyphs">White</text>
<text x="1293" y="874.500" textLength="29" lengthAdjust="spacingAndGlyphs">Red</text>
<text x="1371" y="874.500" textLength="48" lengthAdjust="spacingAndGlyphs">Green</text>
<text x="1461" y="874.500" textLength="34" lengthAdjust="spacingAndGlyphs">Blue</text>
<text x="1539.500" y="874.500" textLength="38" lengthAdjust="spacingAndGlyphs">Cyan</text>
<text x="1629" y="874.500" textLength="70" lengthAdjust="spacingAndGlyphs">Magenta</text>
<text x="1709" y="874.500" textLength="50.500" lengthAdjust="spacingAndGlyphs">Yellow</text>
<text x="1798.600" y="874.500" textLength="46.500" lengthAdjust="spacingAndGlyphs">100W</text>

<text x="1121" y="920" textLength="65.600" lengthAdjust="spacingAndGlyphs">x: CIE31</text>
<text x="1204" y="920" textLength="56" lengthAdjust="spacingAndGlyphs">0,3157</text>
<text x="1293" y="920" textLength="56" lengthAdjust="spacingAndGlyphs">0,6377</text>
<text x="1371" y="920" textLength="56" lengthAdjust="spacingAndGlyphs">0,2953</text>
<text x="1461" y="920" textLength="56" lengthAdjust="spacingAndGlyphs">0,1533</text>
<text x="1539.500" y="920" textLength="56" lengthAdjust="spacingAndGlyphs">0,2235</text>
<text x="1629" y="920" textLength="56" lengthAdjust="spacingAndGlyphs">0,3278</text>
<text x="1709" y="920" textLength="56" lengthAdjust="spacingAndGlyphs">0,4223</text>
<text x="1798.600" y="920" textLength="56" lengthAdjust="spacingAndGlyphs">0,3112</text>

<text x="1121" y="964" textLength="65.600" lengthAdjust="spacingAndGlyphs">y: CIE31</text>
<text x="1204" y="964" textLength="56" lengthAdjust="spacingAndGlyphs">0,3349</text>
<text x="1293" y="964" textLength="56" lengthAdjust="spacingAndGlyphs">0,3224</text>
<text x="1371" y="964" textLength="56" lengthAdjust="spacingAndGlyphs">0,6171</text>
<text x="1461" y="964" textLength="56" lengthAdjust="spacingAndGlyphs">0,0651</text>
<text x="1539.500" y="964" textLength="56" lengthAdjust="spacingAndGlyphs">0,3394</text>
<text x="1629" y="964" textLength="56" lengthAdjust="spacingAndGlyphs">0,1571</text>
<text x="1709" y="964" textLength="56" lengthAdjust="spacingAndGlyphs">0,5093</text>
<text x="1798.600" y="964" textLength="56" lengthAdjust="spacingAndGlyphs">0,3300</text>

<text x="1121" y="1007.500" textLength="11" lengthAdjust="spacingAndGlyphs">Y</text>
<text x="1204" y="1007.500" textLength="77" lengthAdjust="spacingAndGlyphs">206,8257</text>
<text x="1293" y="1007.500" textLength="67" lengthAdjust="spacingAndGlyphs">43,9756</text>
<text x="1371" y="1007.500" textLength="78" lengthAdjust="spacingAndGlyphs">144,6570</text>
<text x="1461" y="1007.500" textLength="67" lengthAdjust="spacingAndGlyphs">15,6208</text>
<text x="1539.500" y="1007.500" textLength="77" lengthAdjust="spacingAndGlyphs">161,9693</text>
<text x="1629" y="1007.500" textLength="67" lengthAdjust="spacingAndGlyphs">59,4085</text>
<text x="1709" y="1007.500" textLength="78" lengthAdjust="spacingAndGlyphs">189,4057</text>
<text x="1798.600" y="1007.500" textLength="77" lengthAdjust="spacingAndGlyphs">405,2740</text>

<text x="1121" y="1050.700" textLength="72" lengthAdjust="spacingAndGlyphs">Target Y</text>
<text x="1204" y="1050.700" textLength="77" lengthAdjust="spacingAndGlyphs">206,8257</text>
<text x="1293" y="1050.700" textLength="67" lengthAdjust="spacingAndGlyphs">43,9827</text>
<text x="1371" y="1050.700" textLength="78" lengthAdjust="spacingAndGlyphs">147,9131</text>
<text x="1461" y="1050.700" textLength="67" lengthAdjust="spacingAndGlyphs">14,9298</text>
<text x="1539.500" y="1050.700" textLength="77" lengthAdjust="spacingAndGlyphs">162,8430</text>
<text x="1629" y="1050.700" textLength="67" lengthAdjust="spacingAndGlyphs">58,9126</text>
<text x="1709" y="1050.700" textLength="78" lengthAdjust="spacingAndGlyphs">191,8959</text>
<text x="1798.600" y="1050.700" textLength="77" lengthAdjust="spacingAndGlyphs">405,2740</text>

<text x="1121" y="1094" textLength="70" lengthAdjust="spacingAndGlyphs">ΔE 2000</text>
<text x="1204" y="1094" textLength="56" lengthAdjust="spacingAndGlyphs">2,6114</text>
<text x="1293" y="1094" textLength="56" lengthAdjust="spacingAndGlyphs">2,5331</text>
<text x="1371" y="1094" textLength="56" lengthAdjust="spacingAndGlyphs">1,0496</text>
<text x="1461" y="1094" textLength="56" lengthAdjust="spacingAndGlyphs">1,0891</text>
<text x="1539.500" y="1094" textLength="56" lengthAdjust="spacingAndGlyphs">2,5556</text>
<text x="1629" y="1094" textLength="56" lengthAdjust="spacingAndGlyphs">0,6886</text>
<text x="1709" y="1094" textLength="56" lengthAdjust="spacingAndGlyphs">0,6539</text>
<text x="1798.600" y="1094" textLength="56" lengthAdjust="spacingAndGlyphs">1,8521</text>
</g>
</g>

<!-- scrollbars -->
<rect x="1852.500" y="890" width="18" height="197" fill="#2e2e2e"/>
<rect x="1853" y="890" width="17" height="28" rx="5" fill="#777"/>
<polygon points="1861.500,897 1856,910 1867,910" fill="#4a4a4a"/>
<rect x="1855" y="919" width="13" height="110" rx="6" fill="#424242"/>
<rect x="1853" y="1062" width="17" height="25" rx="5" fill="#777"/>
<polygon points="1861.500,1081 1856,1068 1867,1068" fill="#4a4a4a"/>
<rect x="1116" y="1088" width="735" height="21" fill="#2e2e2e"/>
<rect x="1116" y="1089" width="18" height="20" rx="5" fill="#666"/>
<polygon points="1121,1099 1128,1092 1128,1106" fill="#3a3a3a"/>
<rect x="1138" y="1090" width="665" height="18" rx="8" fill="#424242"/>
<rect x="1835" y="1089" width="16" height="20" rx="5" fill="#666"/>
<polygon points="1847,1099 1840,1092 1840,1106" fill="#3a3a3a"/>

<!-- bottom colour buttons -->
<rect x="0" y="1198" width="1882" height="2" fill="#222"/>
<g>
<rect x="2" y="1108" width="171" height="90" rx="6" fill="url(#bt)"/>
<rect x="177" y="1108" width="172" height="90" rx="6" fill="url(#bt)"/>
<rect x="352.500" y="1108" width="172.500" height="90" rx="6" fill="url(#bt)"/>
<rect x="529" y="1108" width="172" height="90" rx="6" fill="url(#bt)"/>
<rect x="704" y="1108" width="172" height="90" rx="6" fill="url(#bt)"/>
<rect x="880" y="1108" width="172" height="90" rx="6" fill="url(#bt)"/>
<rect x="1055" y="1108" width="172" height="90" rx="6" fill="url(#bt)"/>
<rect x="10" y="1117" width="156.500" height="52" rx="5" fill="#bebebe" stroke="#8e8e8e" stroke-width="1.500"/>
<rect x="185" y="1117" width="157" height="52" rx="5" fill="#bb0000"/>
<rect x="360.500" y="1117" width="157.500" height="52" rx="5" fill="#00bb00"/>
<rect x="535.600" y="1117" width="157.400" height="52" rx="5" fill="#0000bb"/>
<rect x="712" y="1117" width="156.500" height="52" rx="5" fill="#00bbbb"/>
<rect x="886" y="1117" width="158" height="52" rx="5" fill="#bb00bb"/>
<rect x="1063" y="1117" width="157" height="52" rx="5" fill="#bbbb00"/>
<g fill="#000" fill-opacity=".22"><rect x="185" y="1117" width="157" height="3"/><rect x="360.500" y="1117" width="157.500" height="3"/><rect x="535.600" y="1117" width="157.400" height="3"/><rect x="712" y="1117" width="156.500" height="3"/><rect x="886" y="1117" width="158" height="3"/><rect x="1063" y="1117" width="157" height="3"/></g>
<g class="bl" text-anchor="middle">
<text x="87.500" y="1192" textLength="43" lengthAdjust="spacingAndGlyphs">White</text>
<text x="263" y="1192" textLength="27" lengthAdjust="spacingAndGlyphs">Red</text>
<text x="439" y="1192" textLength="43" lengthAdjust="spacingAndGlyphs">Green</text>
<text x="615" y="1192" textLength="32" lengthAdjust="spacingAndGlyphs">Blue</text>
<text x="790" y="1192" textLength="35" lengthAdjust="spacingAndGlyphs">Cyan</text>
<text x="965" y="1192" textLength="63" lengthAdjust="spacingAndGlyphs">Magenta</text>
<text x="1141" y="1192" textLength="48" lengthAdjust="spacingAndGlyphs">Yellow</text>
</g>
<rect x="1230" y="1108" width="173" height="90" rx="6" fill="#272727"/>
<rect x="1237.500" y="1116" width="157.500" height="53" rx="6" fill="#fff"/>
<text x="1316.500" y="1192" font-size="15" font-weight="bold" fill="#fff" text-anchor="middle" textLength="42" lengthAdjust="spacingAndGlyphs">100W</text>
</g>

<!-- stop column -->
<rect x="1407" y="1109" width="71" height="89" rx="5" fill="url(#act2)"/>
<line x1="1407" x2="1478" y1="1135" y2="1135" stroke="#444" stroke-width="1.500"/>
<ellipse cx="1442" cy="1122" rx="11" ry="12.500" fill="#6e6e6e"/>
<polygon points="1442,1116 1435,1126 1449,1126" fill="#2a2a2a"/>
<rect x="1421.500" y="1145.500" width="42.500" height="44.500" rx="7" fill="#8c8c8c" stroke="#2b2b2b" stroke-width="2.500"/>
<rect x="1432" y="1158" width="21" height="19" fill="#000"/>

<!-- action buttons -->
<rect x="1479" y="1109" width="68" height="44.500" fill="url(#act)"/>
<rect x="1548" y="1109" width="65" height="44.500" fill="url(#act)"/>
<rect x="1614" y="1109" width="65" height="44.500" fill="url(#act)"/>
<rect x="1680" y="1109" width="65" height="44.500" fill="url(#act)"/>
<rect x="1746.500" y="1109" width="64.500" height="44.500" fill="url(#act)"/>
<g fill="#8e8e8e">
<ellipse cx="1513" cy="1132" rx="14" ry="15"/><ellipse cx="1580" cy="1132" rx="14" ry="15"/><ellipse cx="1646.600" cy="1132" rx="14" ry="15"/><ellipse cx="1712" cy="1132" rx="14" ry="15"/><ellipse cx="1778" cy="1132" rx="14" ry="15"/>
</g>
<rect x="1507.500" y="1125" width="11" height="13" fill="#2a2a2a"/>
<polygon points="1575,1124 1575,1141 1587,1132.500" fill="#2a2a2a"/>
<path d="M1642 1123.500H1638.500V1139H1642M1652 1123.500H1655.500V1139H1652" fill="none" stroke="#2a2a2a" stroke-width="2.200"/>
<path d="M1644 1131.500H1646M1648 1131.500H1650" fill="none" stroke="#2a2a2a" stroke-width="2.200"/>
<path d="M1712 1131C1709 1126 1703 1126 1703 1131C1703 1136 1709 1136 1712 1131C1715 1126 1721 1126 1721 1131C1721 1136 1715 1136 1712 1131Z" fill="none" stroke="#2a2a2a" stroke-width="2.200"/>
<path d="M1771 1134A7.500 7.500 0 0 1 1784 1127M1785 1130A7.500 7.500 0 0 1 1772 1137" fill="none" stroke="#2a2a2a" stroke-width="3"/>
<polygon points="1787,1121 1787,1130 1779,1129" fill="#2a2a2a"/>
<polygon points="1769,1142 1769,1134 1777,1135" fill="#2a2a2a"/>
<g stroke="#ee0000" stroke-width="7" filter="url(#sh2)">
<line x1="1844" y1="1108" x2="1844" y2="1148"/>
<line x1="1826.500" y1="1118" x2="1861.500" y2="1138"/>
<line x1="1826.500" y1="1138" x2="1861.500" y2="1118"/>
</g>

<!-- Back / Next -->
<rect x="1480" y="1154" width="199" height="44" rx="4" fill="url(#act2)"/>
<rect x="1680" y="1154" width="199" height="44" rx="4" fill="url(#act2)"/>
<ellipse cx="1524" cy="1177" rx="14" ry="15" fill="#8a8a8a"/>
<ellipse cx="1838.500" cy="1177" rx="14" ry="15" fill="#8a8a8a"/>
<text x="1524" y="1187" font-size="36" fill="#333" text-anchor="middle" textLength="15" lengthAdjust="spacingAndGlyphs">«</text>
<text x="1838.500" y="1187" font-size="36" fill="#333" text-anchor="middle" textLength="15" lengthAdjust="spacingAndGlyphs">»</text>
<text x="1563" y="1188" font-size="32" font-weight="bold" fill="#2b2b2b" textLength="75" lengthAdjust="spacingAndGlyphs">Back</text>
<text x="1720" y="1188" font-size="32" font-weight="bold" fill="#2b2b2b" textLength="76" lengthAdjust="spacingAndGlyphs">Next</text>
</svg>
</body>
</html>
